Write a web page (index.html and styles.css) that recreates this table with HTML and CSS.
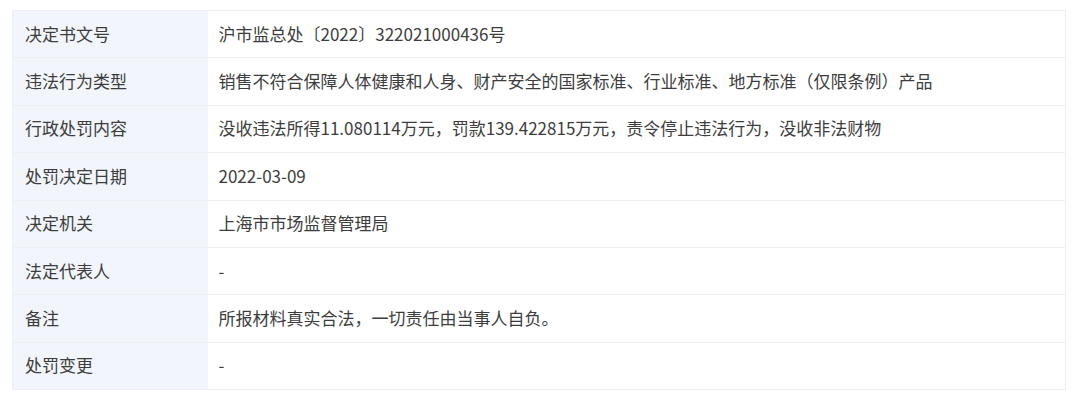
FILE: index.html
```html
<!DOCTYPE html>
<html lang="zh-CN">
<head>
    <meta charset="UTF-8">
    <meta name="viewport" content="width=device-width, initial-scale=1.0">
    <link rel="stylesheet" href="styles.css">
    <title>行政处罚信息</title>
</head>
<body>
    <table class="info-table">
        <tr>
            <th>决定书文号</th>
            <td>沪市监总处〔2022〕322021000436号</td>
        </tr>
        <tr>
            <th>违法行为类型</th>
            <td>销售不符合保障人体健康和人身、财产安全的国家标准、行业标准、地方标准（仅限条例）产品</td>
        </tr>
        <tr>
            <th>行政处罚内容</th>
            <td>没收违法所得11.080114万元，罚款139.422815万元，责令停止违法行为，没收非法财物</td>
        </tr>
        <tr>
            <th>处罚决定日期</th>
            <td>2022-03-09</td>
        </tr>
        <tr>
            <th>决定机关</th>
            <td>上海市市场监督管理局</td>
        </tr>
        <tr>
            <th>法定代表人</th>
            <td>-</td>
        </tr>
        <tr>
            <th>备注</th>
            <td>所报材料真实合法，一切责任由当事人自负。</td>
        </tr>
        <tr>
            <th>处罚变更</th>
            <td>-</td>
        </tr>
    </table>
</body>
</html>
```

FILE: styles.css
```css
body {
    margin: 0;
    padding: 10px 14px 0 12px;
    background-color: #ffffff;
    font-family: "Noto Sans CJK SC", "Noto Sans", sans-serif;
    color: #3d3d3d;
}

.info-table {
    width: 1054px;
    border-collapse: collapse;
    font-size: 17px;
}

.info-table th,
.info-table td {
    height: 47.4px;
    padding: 0 11px 2px;
    border: 1px solid #eceff3;
    text-align: left;
    font-weight: normal;
    vertical-align: middle;
    box-sizing: border-box;
    white-space: nowrap;
}

.info-table th {
    width: 195px;
    padding-left: 12px;
    background-color: #f2f5fb;
    border-right: none;
}

.info-table td {
    border-left: none;
}
```
